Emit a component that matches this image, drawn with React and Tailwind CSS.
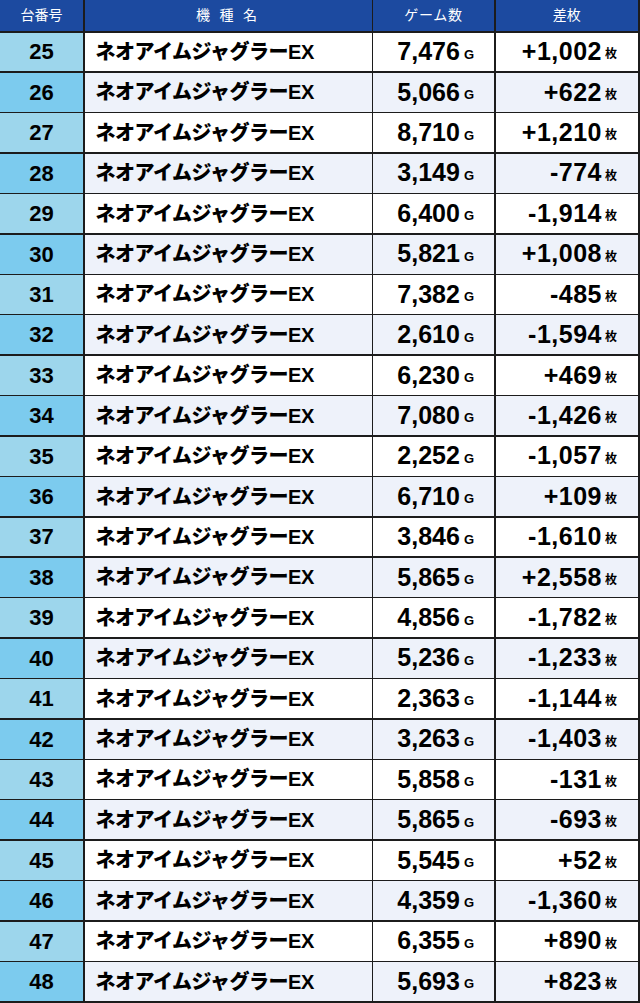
import React from 'react';

const rows = [
  [25, '7,476', '+1,002'],
  [26, '5,066', '+622'],
  [27, '8,710', '+1,210'],
  [28, '3,149', '-774'],
  [29, '6,400', '-1,914'],
  [30, '5,821', '+1,008'],
  [31, '7,382', '-485'],
  [32, '2,610', '-1,594'],
  [33, '6,230', '+469'],
  [34, '7,080', '-1,426'],
  [35, '2,252', '-1,057'],
  [36, '6,710', '+109'],
  [37, '3,846', '-1,610'],
  [38, '5,865', '+2,558'],
  [39, '4,856', '-1,782'],
  [40, '5,236', '-1,233'],
  [41, '2,363', '-1,144'],
  [42, '3,263', '-1,403'],
  [43, '5,858', '-131'],
  [44, '5,865', '-693'],
  [45, '5,545', '+52'],
  [46, '4,359', '-1,360'],
  [47, '6,355', '+890'],
  [48, '5,693', '+823'],
];

const font = { fontFamily: '"Liberation Sans", "Noto Sans CJK JP", sans-serif' };

const App = () => {
  return (
    <div
      style={font}
      className="w-[640px] h-[1003px] bg-[#1c1c1c] grid grid-cols-[83px_287px_121px_1fr] grid-rows-[31px_repeat(24,1fr)] gap-[1.5px] pr-[2px] pb-[2px] text-black"
    >
      <div className="bg-[#1c4aa0] text-white text-[14px] flex items-center justify-center">台番号</div>
      <div className="bg-[#1c4aa0] text-white text-[14px] flex items-center justify-center tracking-[0.2em]">機 種 名</div>
      <div className="bg-[#1c4aa0] text-white text-[14px] flex items-center justify-center tracking-[0.05em]">ゲーム数</div>
      <div className="bg-[#1c4aa0] text-white text-[14px] flex items-center justify-center">差枚</div>

      {rows.map(([no, games, diff], i) => {
        const even = i % 2 === 1;
        const cell = even ? 'bg-[#eef2fa]' : 'bg-white';
        return (
          <React.Fragment key={no}>
            <div className={`${even ? 'bg-[#7ccbee]' : 'bg-[#9dd6ec]'} flex items-center justify-center text-[22px] font-bold`}>
              {no}
            </div>
            <div className={`${cell} flex items-center pl-[11px] text-[20px] font-black tracking-[-0.025em]`}>
              ネオアイムジャグラーEX
            </div>
            <div className={`${cell} flex items-center justify-end pr-[20px]`}>
              <span className="text-[25px] font-bold">{games}</span>
              <span className="text-[13px] font-bold ml-[4px] mt-[5px]">G</span>
            </div>
            <div className={`${cell} flex items-center justify-end pr-[21px]`}>
              <span className="text-[25px] font-bold tracking-[0.02em]">{diff}</span>
              <span className="text-[12px] font-bold ml-[3px] mt-[5px]">枚</span>
            </div>
          </React.Fragment>
        );
      })}
    </div>
  );
};

export default App;
